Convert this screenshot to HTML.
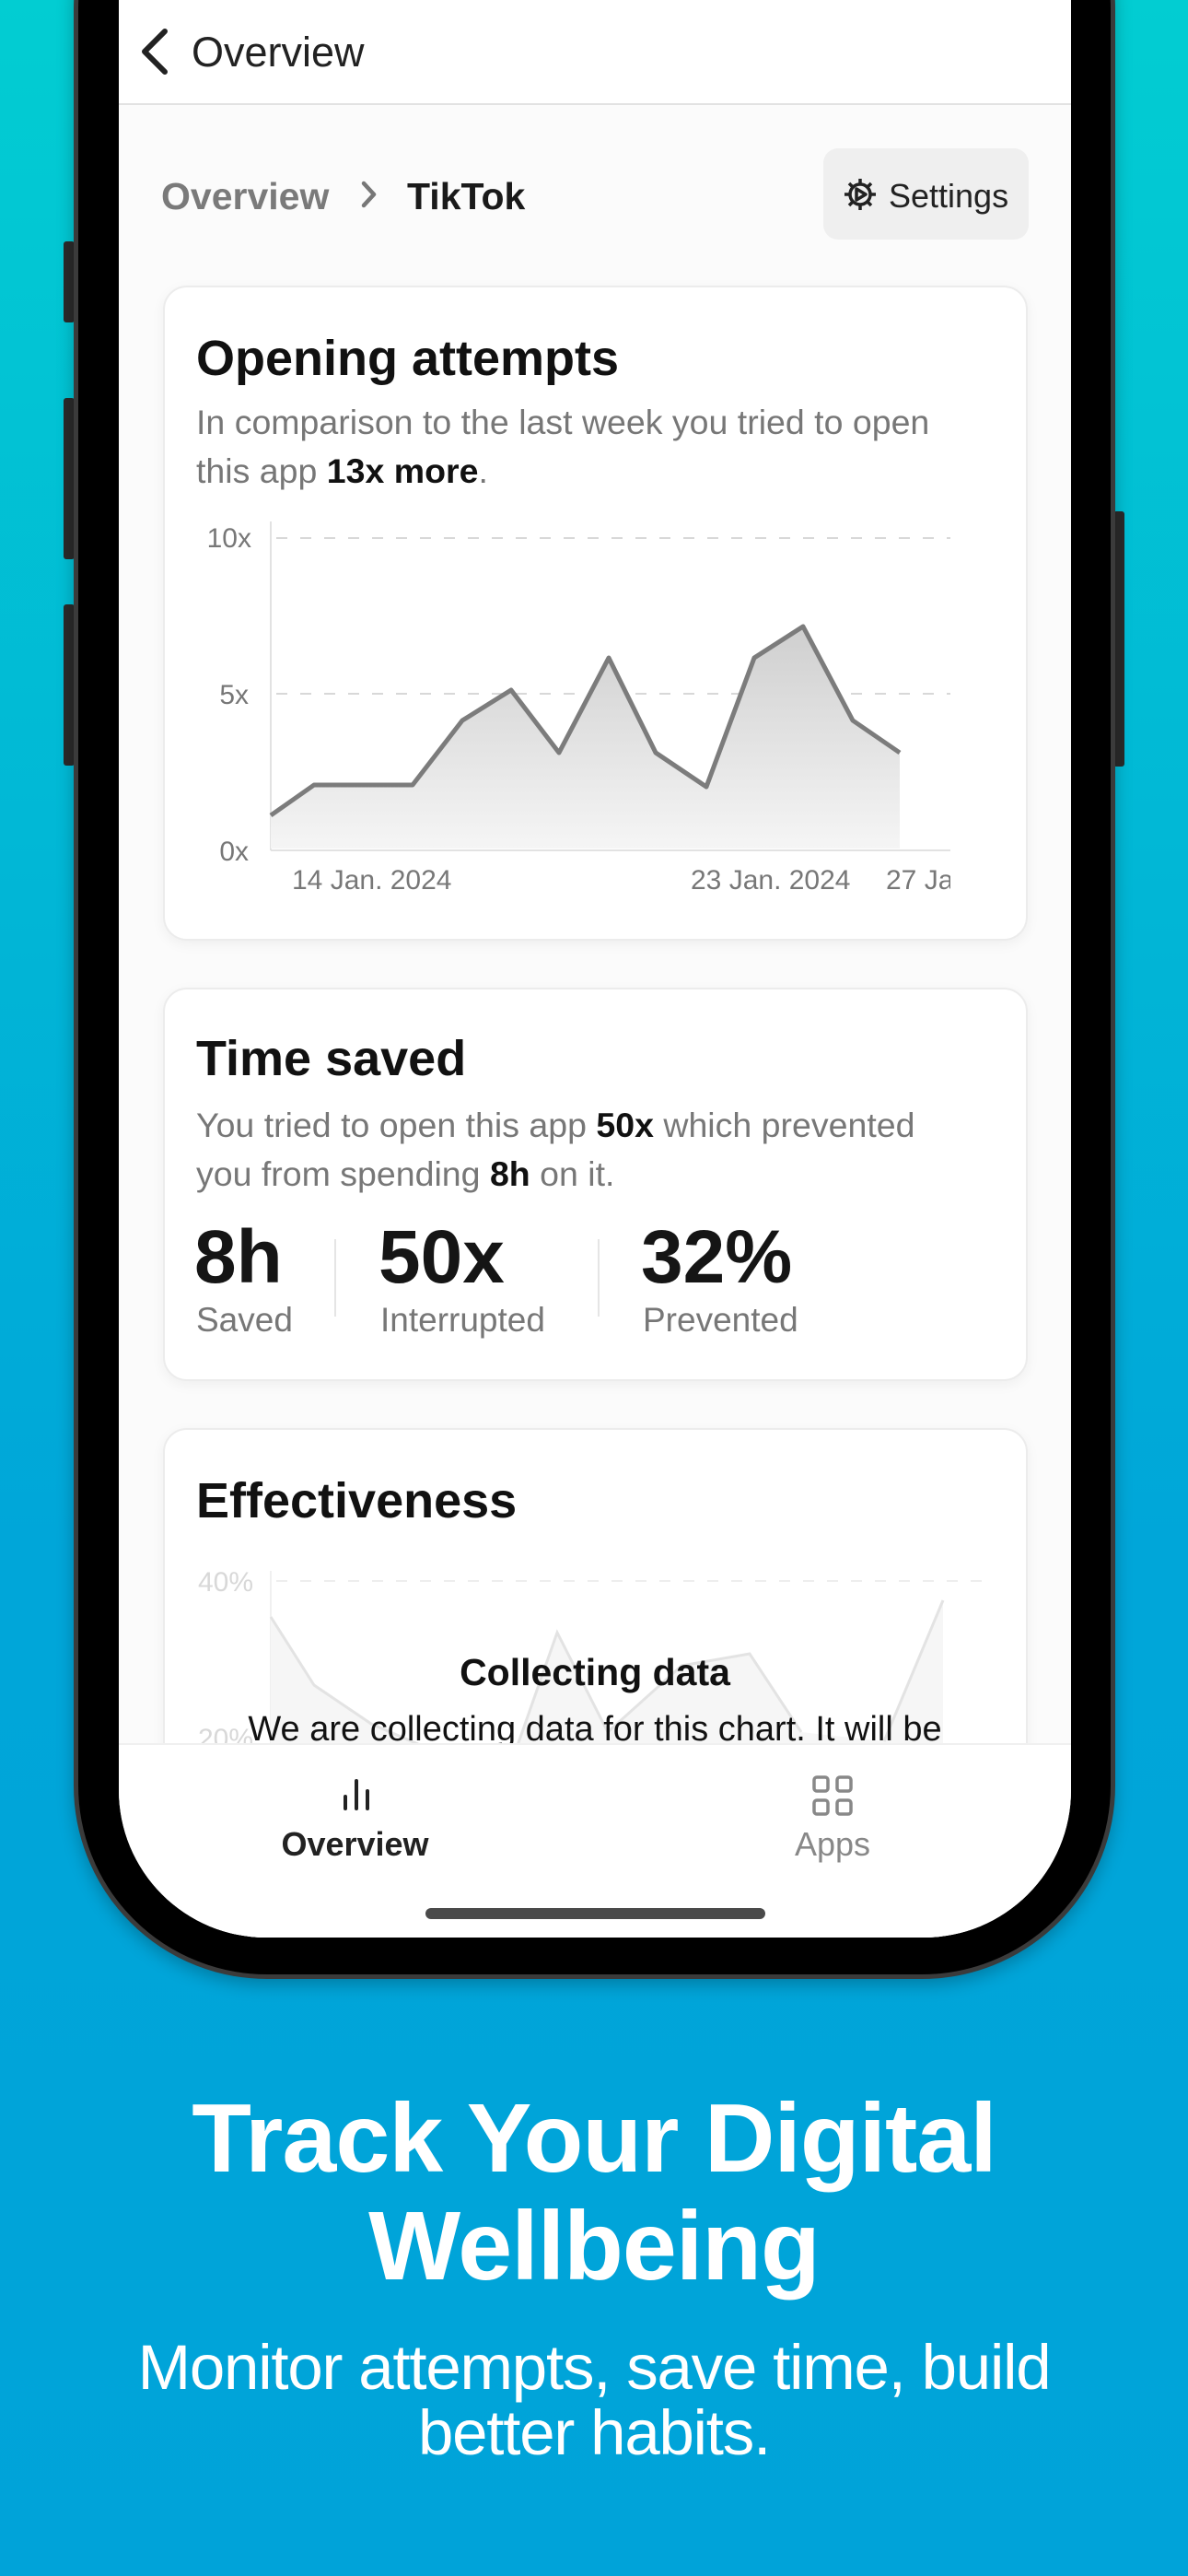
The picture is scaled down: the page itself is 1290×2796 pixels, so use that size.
<!DOCTYPE html>
<html><head><meta charset="utf-8">
<style>
*{margin:0;padding:0;box-sizing:border-box}
html,body{width:1290px;height:2796px;overflow:hidden}
body{position:relative;background:linear-gradient(180deg,#02cdd2 0%,#01b6d6 35%,#00a6d9 60%,#00a3d9 100%);font-family:"Liberation Sans",Arial,sans-serif}
.abs{position:absolute}
.t{position:absolute;white-space:nowrap;line-height:1.2}
.phone{left:80px;top:-200px;width:1131px;height:2348px;background:#000;border-radius:210px;border:5px solid #3b3b3b;box-shadow:0 6px 18px rgba(0,0,0,.25)}
.screen{left:129px;top:-200px;width:1034px;height:2303px;background:#fbfbfb;border-radius:160px;overflow:hidden}
.card{position:absolute;left:48px;width:939px;background:#fff;border:2px solid #ececec;border-radius:26px;box-shadow:0 4px 14px rgba(0,0,0,.05)}
.btn{position:absolute;background:#2a2a2a;border-radius:3px}
</style></head><body>
<div class="btn" style="left:69px;top:262px;width:12px;height:88px"></div>
<div class="btn" style="left:69px;top:432px;width:12px;height:175px"></div>
<div class="btn" style="left:69px;top:656px;width:12px;height:175px"></div>
<div class="btn" style="left:1209px;top:555px;width:12px;height:277px"></div>
<div class="abs phone"></div>
<div class="abs screen">
 <div style="position:absolute;left:0;top:200px;width:1034px;height:2103px">
  <div class="abs" style="left:0;top:-200px;width:1034px;height:314px;background:#fff;border-bottom:2px solid #e2e2e2"></div>
  <svg class="abs" style="left:20px;top:30px" width="36" height="52" viewBox="0 0 36 52"><path d="M30 4 L8 26 L30 48" fill="none" stroke="#222" stroke-width="6" stroke-linecap="round" stroke-linejoin="round"/></svg>
  <div class="t" style="left:79px;top:30px;font-size:45px;color:#222">Overview</div>
  <div class="t" style="left:46px;top:189px;font-size:41px;font-weight:bold;color:#7a7a7a">Overview</div>
  <svg class="abs" style="left:262px;top:196px" width="20" height="30" viewBox="0 0 20 30"><path d="M4 3 L15 15 L4 27" fill="none" stroke="#777" stroke-width="4.5" stroke-linecap="round" stroke-linejoin="round"/></svg>
  <div class="t" style="left:313px;top:189px;font-size:41px;font-weight:bold;color:#1a1a1a">TikTok</div>
  <div class="abs" style="left:765px;top:161px;width:223px;height:99px;background:#efefef;border-radius:16px"></div>
  <svg class="abs" style="left:786px;top:192px" width="38" height="38" viewBox="0 0 38 38"><g fill="none" stroke="#222" stroke-width="3.5"><circle cx="19" cy="19" r="11"/><path d="M19 2v6M19 30v6M2 19h6M30 19h6M7 7l4 4M27 27l4 4M31 7l-4 4M11 27l-4 4"/><path d="M15 13 L25 19 L15 25 Z" stroke-linejoin="round"/></g></svg>
  <div class="t" style="left:836px;top:191px;font-size:36px;color:#222">Settings</div>

  <div class="card" style="top:310px;height:711px"></div>
  <div class="t" style="left:84px;top:357px;font-size:54px;font-weight:bold;color:#111">Opening attempts</div>
  <div class="t" style="left:84px;top:432px;font-size:37.5px;color:#777;line-height:53px">In comparison to the last week you tried to open<br>this app <b style="color:#111">13x more</b>.</div>
  <svg class="abs" style="left:0;top:0;overflow:visible" width="1034" height="1100">
   <defs><linearGradient id="g1" x1="0" y1="0" x2="0" y2="1"><stop offset="0" stop-color="#cfcfcf"/><stop offset="1" stop-color="#f5f5f5"/></linearGradient></defs>
   <g transform="translate(-129,0)">
    <line x1="300" y1="584" x2="1032" y2="584" stroke="#d8d8d8" stroke-width="2" stroke-dasharray="12 14"/>
    <line x1="300" y1="753" x2="1032" y2="753" stroke="#d8d8d8" stroke-width="2" stroke-dasharray="12 14"/>
    <line x1="294" y1="566" x2="294" y2="923" stroke="#e2e2e2" stroke-width="2"/>
    <line x1="294" y1="923" x2="1032" y2="923" stroke="#e2e2e2" stroke-width="2"/>
    <path d="M294 885 L341 852 L448 852 L502 782 L555 749 L607 817 L661 714 L712 817 L767 854 L819 714 L872 680 L926 782 L977 817 L977 921 L294 921 Z" fill="url(#g1)"/>
    <path d="M294 885 L341 852 L448 852 L502 782 L555 749 L607 817 L661 714 L712 817 L767 854 L819 714 L872 680 L926 782 L977 817" fill="none" stroke="#7c7c7c" stroke-width="5" stroke-linejoin="round"/>
    <g font-family="Liberation Sans,Arial,sans-serif" font-size="30" fill="#777">
     <text x="273" y="594" text-anchor="end">10x</text>
     <text x="270" y="764" text-anchor="end">5x</text>
     <text x="270" y="934" text-anchor="end">0x</text>
     <text x="317" y="965">14 Jan. 2024</text>
     <text x="750" y="965">23 Jan. 2024</text>
    </g>
    <svg x="940" y="930" width="92" height="50"><text x="22" y="35" font-family="Liberation Sans,Arial,sans-serif" font-size="30" fill="#777">27 Jan</text></svg>
   </g>
  </svg>

  <div class="card" style="top:1072px;height:427px"></div>
  <div class="t" style="left:84px;top:1117px;font-size:54px;font-weight:bold;color:#111">Time saved</div>
  <div class="t" style="left:84px;top:1195px;font-size:37.5px;color:#777;line-height:53px">You tried to open this app <b style="color:#111">50x</b> which prevented<br>you from spending <b style="color:#111">8h</b> on it.</div>
  <div class="t" style="left:82px;top:1316px;font-size:82px;font-weight:bold;color:#151515">8h</div>
  <div class="t" style="left:84px;top:1411px;font-size:37px;color:#777">Saved</div>
  <div class="abs" style="left:234px;top:1345px;width:2px;height:84px;background:#e5e5e5"></div>
  <div class="t" style="left:282px;top:1316px;font-size:82px;font-weight:bold;color:#151515">50x</div>
  <div class="t" style="left:284px;top:1411px;font-size:37px;color:#777">Interrupted</div>
  <div class="abs" style="left:520px;top:1345px;width:2px;height:84px;background:#e5e5e5"></div>
  <div class="t" style="left:567px;top:1316px;font-size:82px;font-weight:bold;color:#151515">32%</div>
  <div class="t" style="left:569px;top:1411px;font-size:37px;color:#777">Prevented</div>

  <div class="card" style="top:1550px;height:600px"></div>
  <div class="t" style="left:84px;top:1597px;font-size:54px;font-weight:bold;color:#111">Effectiveness</div>
  <svg class="abs" style="left:0;top:0;overflow:visible" width="1034" height="1900">
   <g transform="translate(-129,0)">
    <line x1="300" y1="1716" x2="1070" y2="1716" stroke="#eee" stroke-width="2" stroke-dasharray="12 14"/>
    <line x1="294" y1="1705" x2="294" y2="1900" stroke="#f0f0f0" stroke-width="2"/>
    <path d="M294 1755 L341 1829 L403 1871 L470 1900 L560 1900 L605 1772 L660 1880 L740 1808 L814 1795 L870 1880 L960 1890 L1024 1737 L1024 1900 L294 1900 Z" fill="#f6f6f6"/>
    <path d="M294 1755 L341 1829 L403 1871 L470 1900 M560 1900 L605 1772 L660 1880 L740 1808 L814 1795 L870 1880 M960 1890 L1024 1737" fill="none" stroke="#e3e3e3" stroke-width="3"/>
    <text x="215" y="1727" font-family="Liberation Sans,Arial,sans-serif" font-size="30" fill="#d8d8d8">40%</text>
    <text x="215" y="1897" font-family="Liberation Sans,Arial,sans-serif" font-size="30" fill="#d8d8d8">20%</text>
   </g>
  </svg>
  <div class="t" style="left:0;width:1034px;text-align:center;top:1791px;font-size:41px;font-weight:bold;color:#111">Collecting data</div>
  <div class="t" style="left:0;width:1034px;text-align:center;top:1855px;font-size:38px;color:#111">We are collecting data for this chart. It will be</div>

  <div class="abs" style="left:0;top:1892px;width:1034px;height:220px;background:#fff;border-top:2px solid #f0f0f0"></div>
  <svg class="abs" style="left:240px;top:1930px" width="36" height="36" viewBox="0 0 36 36"><g stroke="#222" stroke-width="4" stroke-linecap="round"><path d="M6 20v13M18 3v30M30 14v19"/></g></svg>
  <div class="t" style="left:0;width:513px;text-align:center;top:1980px;font-size:36px;font-weight:bold;color:#222">Overview</div>
  <svg class="abs" style="left:752px;top:1926px" width="46" height="46" viewBox="0 0 46 46"><g fill="none" stroke="#888" stroke-width="3.5"><rect x="3" y="3" width="15" height="15" rx="3"/><rect x="28" y="3" width="15" height="15" rx="3"/><rect x="3" y="28" width="15" height="15" rx="3"/><rect x="28" y="28" width="15" height="15" rx="3"/></g></svg>
  <div class="t" style="left:690px;width:170px;text-align:center;top:1980px;font-size:36px;color:#888">Apps</div>
  <div class="abs" style="left:333px;top:2071px;width:369px;height:12px;border-radius:6px;background:#4a4a4a"></div>
 </div>
</div>

<div class="t" style="left:0;width:1290px;text-align:center;top:2263px;font-size:106px;font-weight:bold;color:#fff;line-height:117px;letter-spacing:-1px">Track Your Digital<br>Wellbeing</div>
<div class="t" style="left:0;width:1290px;text-align:center;top:2534px;font-size:69px;color:#fff;line-height:71px;letter-spacing:-1.2px">Monitor attempts, save time, build<br>better habits.</div>
</body></html>
